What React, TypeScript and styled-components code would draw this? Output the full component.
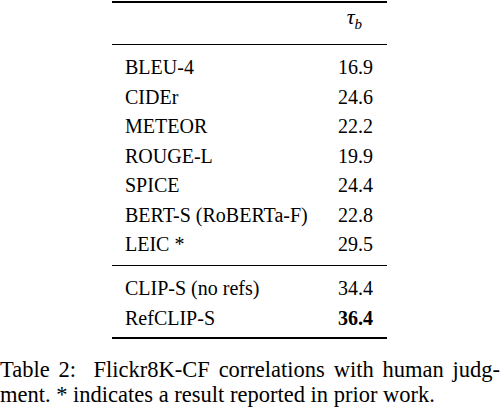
import React from "react";
import styled, { createGlobalStyle } from "styled-components";

const Global = createGlobalStyle`
  html, body { margin: 0; padding: 0; background: #ffffff; }
  body { font-family: "Liberation Serif", "Times New Roman", serif; color: #000; }
`;

const Page = styled.div`
  width: 504px;
  padding-top: 1px;
`;

const TableBox = styled.div`
  margin-left: 112px;
  width: 275px;
`;

const Rule = styled.div<{ $thick?: boolean }>`
  height: ${(p) => (p.$thick ? 2 : 1)}px;
  background: #000;
`;

const HeaderRow = styled.div`
  height: 41px;
  box-sizing: border-box;
  padding: 3px 25px 0 0;
  display: flex;
  justify-content: flex-end;
  align-items: flex-start;
`;

const Tau = styled.span`
  font-style: italic;
  font-size: 22px;
  line-height: 22px;
`;

const Sub = styled.sub`
  font-style: italic;
  font-size: 15px;
  line-height: 0;
  vertical-align: -5px;
`;

const Section = styled.div<{ $top: number; $bottom: number }>`
  padding-top: ${(p) => p.$top}px;
  padding-bottom: ${(p) => p.$bottom}px;
`;

const Row = styled.div<{ $step?: number }>`
  display: flex;
  justify-content: space-between;
  padding: 0 14px 0 13px;
  font-size: 20px;
  line-height: ${(p) => p.$step ?? 29.5}px;
`;

const Value = styled.span<{ $bold?: boolean }>`
  font-weight: ${(p) => (p.$bold ? 700 : 400)};
`;

const Caption = styled.div`
  margin-top: 18px;
  width: 500px;
  font-size: 22.5px;
  line-height: 25px;
`;

const CaptionLine = styled.div<{ $justify?: boolean }>`
  text-align: ${(p) => (p.$justify ? "justify" : "left")};
  text-align-last: ${(p) => (p.$justify ? "justify" : "left")};
  white-space: nowrap;
`;

const rows: [string, string][] = [
  ["BLEU-4", "16.9"],
  ["CIDEr", "24.6"],
  ["METEOR", "22.2"],
  ["ROUGE-L", "19.9"],
  ["SPICE", "24.4"],
  ["BERT-S (RoBERTa-F)", "22.8"],
  ["LEIC *", "29.5"],
];

export default function App() {
  return (
    <Page>
      <Global />
      <TableBox>
        <Rule $thick />
        <HeaderRow>
          <Tau>
            τ<Sub>b</Sub>
          </Tau>
        </HeaderRow>
        <Rule />
        <Section $top={8} $bottom={5}>
          {rows.map(([name, v]) => (
            <Row key={name}>
              <span>{name}</span>
              <Value>{v}</Value>
            </Row>
          ))}
        </Section>
        <Rule />
        <Section $top={7} $bottom={4}>
          <Row $step={30}>
            <span>CLIP-S (no refs)</span>
            <Value>34.4</Value>
          </Row>
          <Row $step={30}>
            <span>RefCLIP-S</span>
            <Value $bold>36.4</Value>
          </Row>
        </Section>
        <Rule $thick />
      </TableBox>
      <Caption>
        <CaptionLine $justify>
          Table 2:&nbsp; Flickr8K-CF correlations with human judg-
        </CaptionLine>
        <CaptionLine>ment. * indicates a result reported in prior work.</CaptionLine>
      </Caption>
    </Page>
  );
}
